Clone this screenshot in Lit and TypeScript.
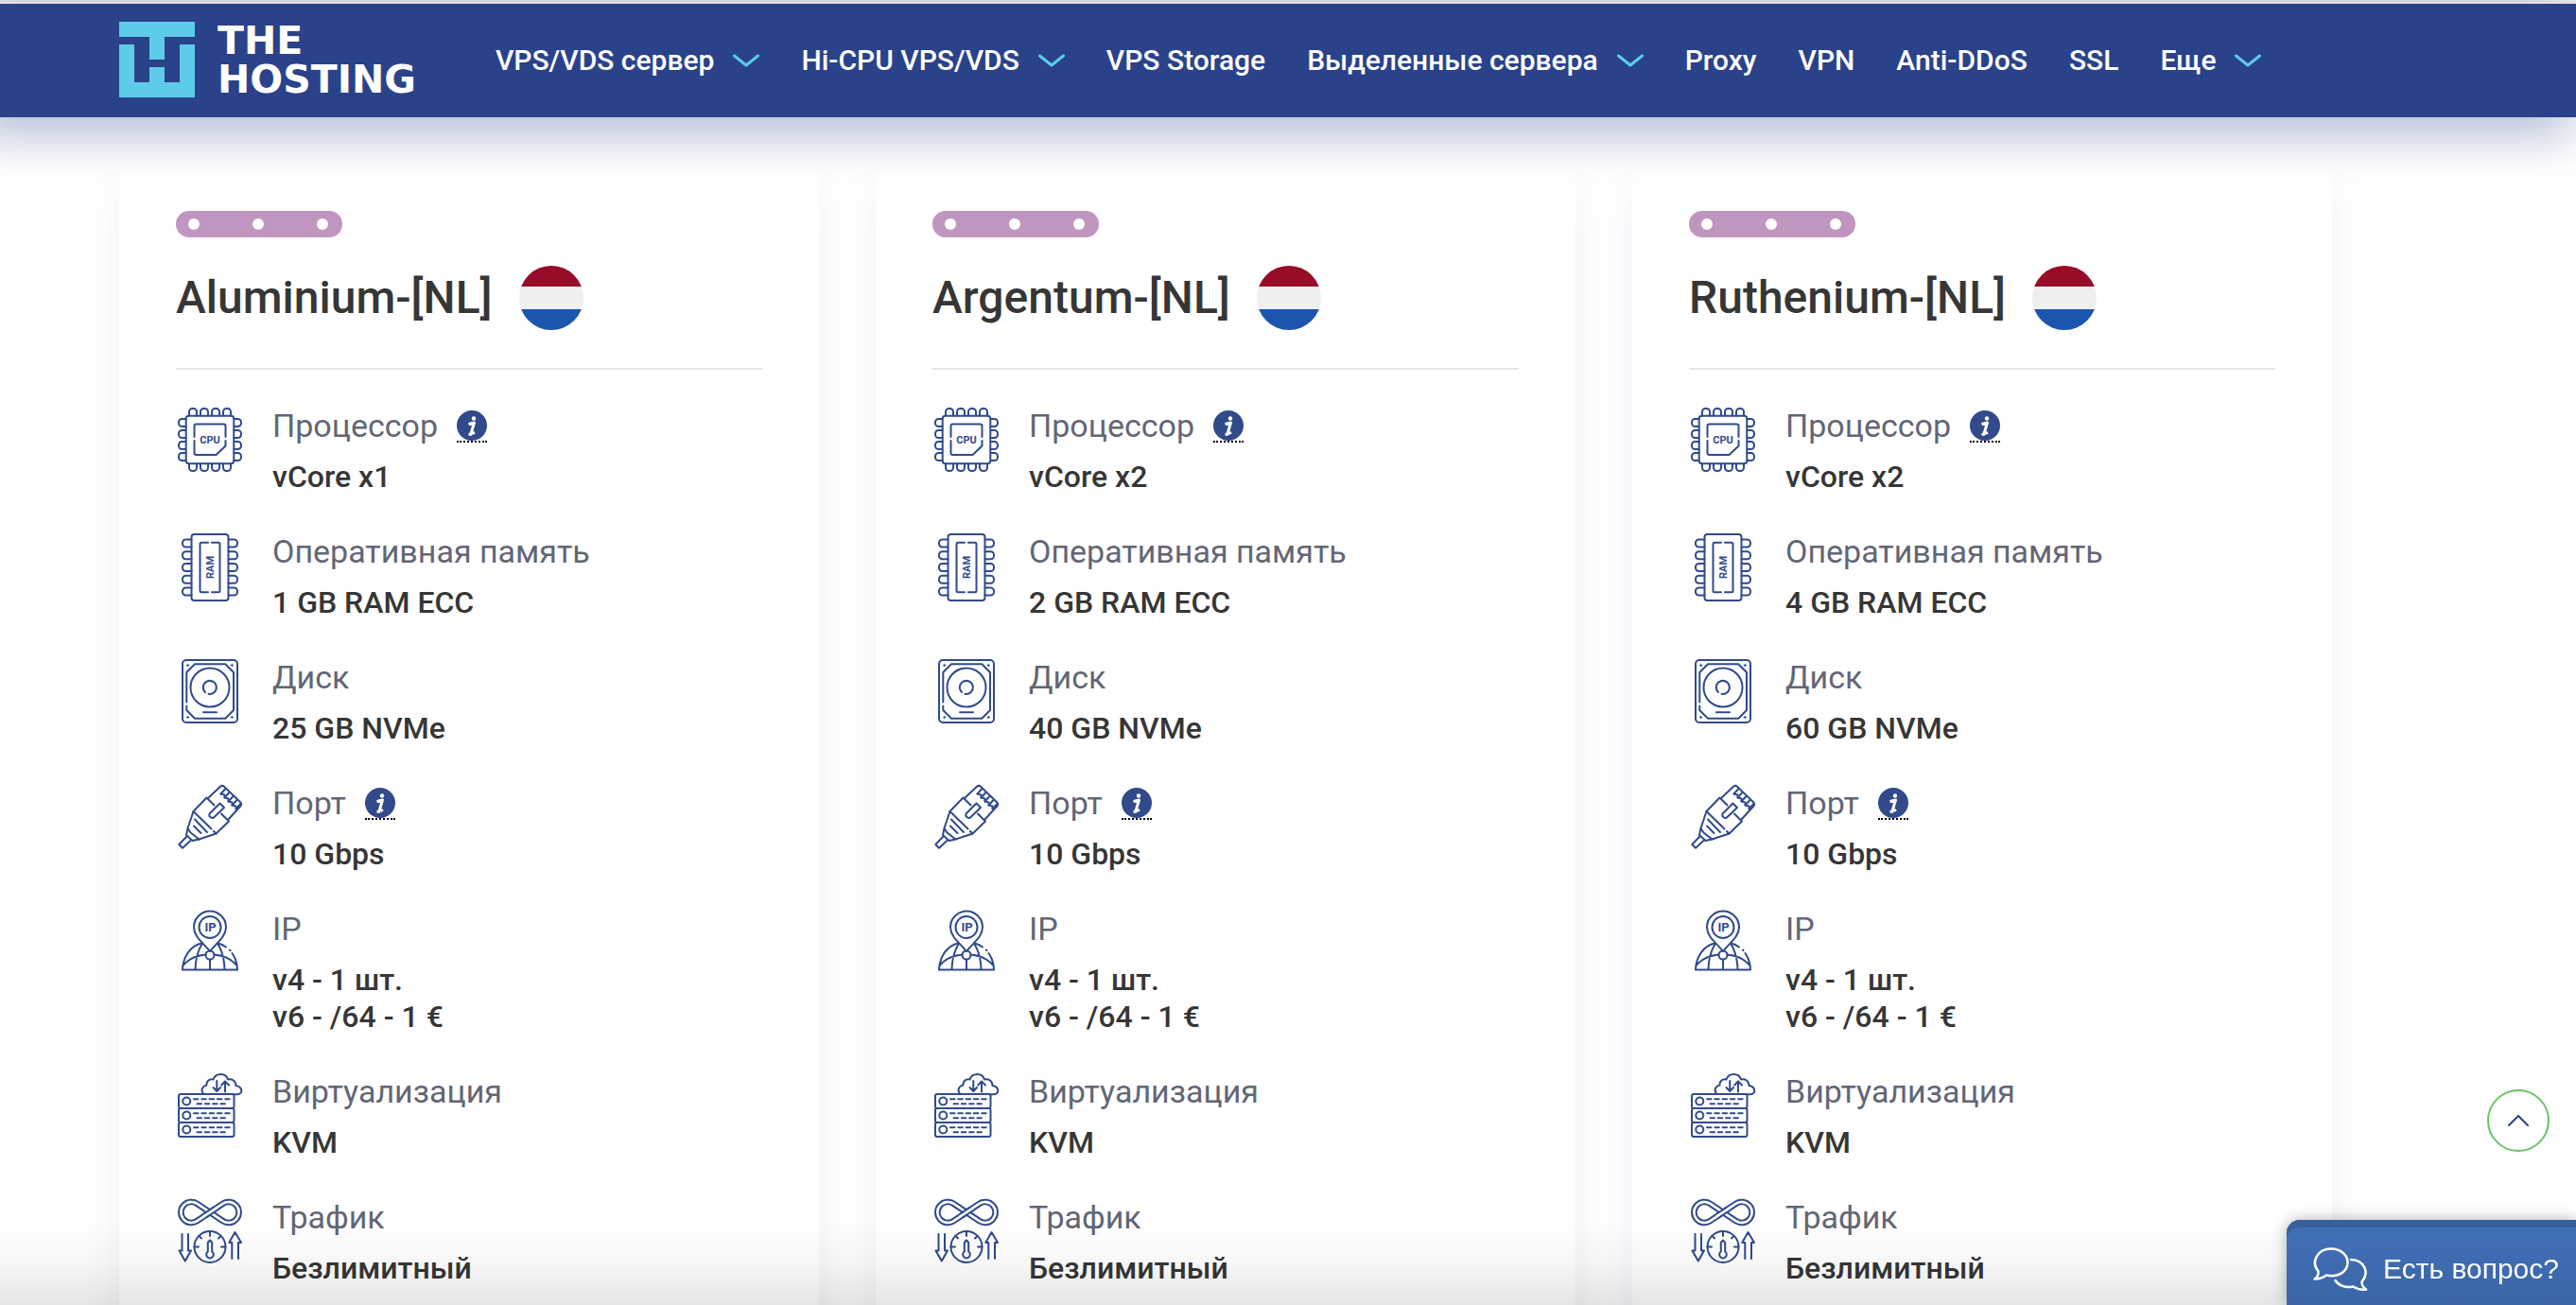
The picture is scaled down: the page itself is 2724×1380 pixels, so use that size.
import { LitElement, html, svg, css, nothing, SVGTemplateResult } from "lit";
import { customElement, property } from "lit/decorators.js";

interface Feature {
  icon: string;
  label: string;
  lines: string[];
  info?: boolean;
}

interface Plan {
  name: string;
  features: Feature[];
}

const makePlan = (name: string, cores: number, ram: number, disk: number): Plan => ({
  name,
  features: [
    { icon: "cpu", label: "Процессор", lines: [`vCore x${cores}`], info: true },
    { icon: "ram", label: "Оперативная память", lines: [`${ram} GB RAM ECC`] },
    { icon: "disk", label: "Диск", lines: [`${disk} GB NVMe`] },
    { icon: "port", label: "Порт", lines: ["10 Gbps"], info: true },
    { icon: "ip", label: "IP", lines: ["v4 - 1 шт.", "v6 - /64 - 1 €"] },
    { icon: "virt", label: "Виртуализация", lines: ["KVM"] },
    { icon: "traffic", label: "Трафик", lines: ["Безлимитный"] },
  ],
});

const plans: Plan[] = [
  makePlan("Aluminium-[NL]", 1, 1, 25),
  makePlan("Argentum-[NL]", 2, 2, 40),
  makePlan("Ruthenium-[NL]", 2, 4, 60),
];

const navItems: { text: string; menu?: boolean }[] = [
  { text: "VPS/VDS сервер", menu: true },
  { text: "Hi-CPU VPS/VDS", menu: true },
  { text: "VPS Storage" },
  { text: "Выделенные сервера", menu: true },
  { text: "Proxy" },
  { text: "VPN" },
  { text: "Anti-DDoS" },
  { text: "SSL" },
  { text: "Еще", menu: true },
];

const cpuPins = [16, 28, 40, 52];
const ramPins = [10.5, 23.2, 36, 48.8, 61.5];
const shelves = [22, 37, 52];
const contacts = [0, 4, 8, 12, 16];

const icons: Record<string, { w: number; h: number; art: SVGTemplateResult }> = {
  cpu: {
    w: 68,
    h: 68,
    art: svg`
      ${[0, 90, 180, 270].map(
        (a) => svg`<g transform="rotate(${a} 34 34)">${cpuPins.map(
          (x) => svg`<path d="M${x - 4} 8.5V4.5a3.5 3.5 0 0 1 3.5 -3.5h1a3.5 3.5 0 0 1 3.5 3.5V8.5"/>`
        )}</g>`
      )}
      <rect x="8.7" y="8.7" width="50.6" height="50.6" rx="3"/>
      <path d="M17.5 31V19.5q0 -2 2 -2h29q2 0 2 2V31M50.5 35v5.5l-10 9.5H19.5q-2 0 -2 -2V35"/>
      <text class="t" x="34" y="37.5" font-size="11">CPU</text>`,
  },
  ram: {
    w: 60,
    h: 72,
    art: svg`
      ${ramPins.map(
        (y) => svg`<path d="M10.5 ${y - 4}H4.5a3.5 3.5 0 0 0 -3.5 3.5v1a3.5 3.5 0 0 0 3.5 3.5H10.5M49.5 ${y - 4}h6a3.5 3.5 0 0 1 3.5 3.5v1a3.5 3.5 0 0 1 -3.5 3.5h-6"/>`
      )}
      <rect x="10.5" y="1" width="39" height="70" rx="3"/>
      <path d="M28 9.7H21q-1.5 0 -1.5 1.5v49.6q0 1.5 1.5 1.5H28M32 9.7h7q1.5 0 1.5 1.5v49.6q0 1.5 -1.5 1.5H32"/>
      <text class="t" x="0" y="0" font-size="11" transform="translate(34 36) rotate(-90)">RAM</text>`,
  },
  disk: {
    w: 60,
    h: 68,
    art: svg`
      <rect x="1" y="1" width="58" height="66" rx="4"/>
      <path d="M5.3 45.5V14L14 5.3H46.3L55 14V54L46.3 62.7H14L5.3 54V49.5"/>
      <circle cx="30" cy="30" r="20.5"/>
      <path d="M25 35A7 7 0 1 1 28.5 36.8"/>
      <path d="M23 56.2H37"/>
      <path stroke-width="1" d="M5.5 6.5h2.5M6.7 5.2v2.5M52 6.5h2.5M53.3 5.2v2.5M5.5 61.5h2.5M6.7 60.2v2.5M52 61.5h2.5M53.3 60.2v2.5"/>`,
  },
  port: {
    w: 68,
    h: 68,
    art: svg`
      <path d="M31.5 14.5L45 1.8Q47 0 49 1.8L66.3 18.5Q68 20.5 66.3 22.5L53 37"/>
      ${contacts.map((d) => svg`<path d="M${45.5 + d} ${9.5 + d}l4.5 -5"/>`)}
      <path d="M45.5 9.5l4 1 0 3 4 1 0 3 4 1 0 3 4 1 0 2.5"/>
      <path d="M38.5 21.5L30.5 13.5L16.5 28L10.5 46L13.5 50.5L22.5 57.5L40.5 51.5L54 38.5L46 30.5"/>
      <path d="M16.5 28L35.5 46.5M38 49L40.5 51.5M18 36.5L31 50M17 43.5L24.5 51"/>
      <path d="M33.5 30.5L44.5 19.5L49 24L38 34.5a3.2 3.2 0 0 1 -4.5 -4z"/>
      <path d="M10.5 46L9 53L15.5 59L22.5 57.5M10 54L1.3 63L5 66.8L14.5 58"/>`,
  },
  ip: {
    w: 60,
    h: 64,
    art: svg`
      <path d="M30 43C24 35 13 28 13 17.5A17 17 0 0 1 47 17.5C47 28 36 35 30 43Z"/>
      <circle cx="30" cy="17.5" r="11.5"/>
      <text class="t" x="30.5" y="22" font-size="13">IP</text>
      <circle cx="30" cy="47" r="4.5"/>
      <path d="M1 62.5H59M1 62.5C1.5 49 9 37 21.5 34.5M59 62.5C58.8 56 57 50 53.5 45M51 41.5l.5 .6M47 38.5Q43 35.5 38.5 34.5"/>
      <path d="M30 52V62M14.5 62Q15 46 21.5 35.5M45.5 62Q45 46 38.5 35.5M2 57.5Q10 48 25.5 46.5M58 57.5Q50 48 34.5 46.5"/>`,
  },
  virt: {
    w: 68,
    h: 68,
    art: svg`
      ${shelves.map(
        (y) => svg`<rect x="1" y="${y}" width="58.5" height="15" rx="2"/>
          <circle cx="9.3" cy="${y + 7.5}" r="4"/>
          <path stroke-dasharray="4.5 3.8" d="M17 ${y + 5.2}H55M20.5 ${y + 10.2}H52"/>`
      )}
      <path d="M27 21.5C23.5 17 27 13 30.5 12.5C30 8.5 33.5 5.5 37.5 6.5C40 -.8 51 -.8 53 6.5C57.5 5.5 61.5 8 61.5 13C69 14.5 69 22 63 22.3H59"/>
      <path d="M41.3 8V19M37.5 15L41.3 19L45 15M50 19.5V8.5M46.2 12.5L50 8.5L54 12.5"/>`,
  },
  traffic: {
    w: 68,
    h: 68,
    art: svg`
      <g stroke-linecap="butt">
        <path stroke-width="6.6" d="M20.5 4.9L47.5 23.1A11 11 0 1 0 47.5 4.9L20.5 23.1A11 11 0 1 1 20.5 4.9Z"/>
        <path class="gap" d="M20.5 4.9L47.5 23.1A11 11 0 1 0 47.5 4.9L20.5 23.1A11 11 0 1 1 20.5 4.9Z"/>
        <path stroke-width="6.6" d="M28.5 17.7L39.5 10.3"/>
        <path class="gap" d="M27 18.7L41 9.3"/>
      </g>
      <circle cx="34" cy="50.5" r="16.5"/>
      <path d="M34 34.5V39M17.5 50.5H22M46 50.5H50.5M22.5 39l2.5 2.5M45.5 39l-2.5 2.5"/>
      <path d="M31.8 55.5V46l2.2 -2.5l2.2 2.5V55.5a3.8 3.8 0 1 1 -4.4 0z"/>
      <path d="M4.5 37V54.5H1.5L7.8 65.5L14 54.5H11V37M57.3 63V46H54.3L60.5 35L67 46H64V63"/>`,
  },
};

@customElement("feature-icon")
export class FeatureIcon extends LitElement {
  @property() name = "cpu";

  static styles = css`
    :host {
      display: flex;
      justify-content: center;
      flex: none;
      width: 68px;
    }
    .glyph {
      display: block;
      overflow: visible;
      fill: none;
      stroke: #304a8b;
      stroke-width: 2;
      stroke-linecap: round;
      stroke-linejoin: round;
    }
    .t {
      font-family: Roboto, sans-serif;
      font-weight: 700;
      text-anchor: middle;
      fill: #304a8b;
      stroke: none;
    }
    .gap {
      stroke: #fff;
      stroke-width: 2.6;
    }
  `;

  render() {
    const { w, h, art } = icons[this.name];
    return html`<svg class="glyph" width=${w} height=${h} viewBox="0 0 ${w} ${h}" aria-hidden="true">${art}</svg>`;
  }
}

@customElement("plan-card")
export class PlanCard extends LitElement {
  @property({ attribute: false }) plan!: Plan;

  static styles = css`
    :host {
      display: block;
      min-width: 0;
    }
    .card {
      padding: 60px;
      background: #fff;
      border-radius: 4px;
      box-shadow: 0 40px 40px rgba(42, 66, 137, 0.08);
    }
    .badge {
      display: flex;
      align-items: center;
      justify-content: space-between;
      box-sizing: border-box;
      width: 176px;
      height: 28px;
      padding: 0 15px 0 13px;
      border-radius: 14px;
      background: #c095c0;
    }
    .dot {
      width: 12px;
      height: 12px;
      border-radius: 50%;
      background: #fff;
    }
    .head {
      display: flex;
      align-items: center;
      gap: 28px;
      margin-top: 30px;
      padding-bottom: 40px;
      border-bottom: 2px solid #e6e6e6;
    }
    .title {
      margin: 0;
      font-size: 48px;
      line-height: 56px;
      font-weight: 500;
      color: #363636;
    }
    .flag {
      display: block;
      flex: none;
    }
    .features {
      display: flex;
      flex-direction: column;
      gap: 40px;
      margin: 40px 0 0;
      padding: 0 2px;
      list-style: none;
    }
    .feature {
      display: flex;
      align-items: flex-start;
      gap: 32px;
    }
    .label {
      display: flex;
      gap: 20px;
      height: 40px;
      font-size: 34px;
      line-height: 38px;
      color: #626675;
    }
    .info {
      box-sizing: border-box;
      width: 32px;
      height: 34px;
      margin-top: 3px;
      padding: 0;
      border: 0;
      border-bottom: 2px dotted #000;
      background: none;
      cursor: help;
    }
    .info-mark {
      display: block;
    }
    .value {
      margin-top: 14px;
      font-size: 32px;
      line-height: 39px;
      font-weight: 500;
      color: #363636;
    }
  `;

  private renderInfo(label: string) {
    return html`<button class="info" type="button" aria-label=${label}>
      <svg class="info-mark" width="32" height="32" viewBox="0 0 32 32" aria-hidden="true">
        <circle cx="16" cy="16" r="16" fill="#304a8b" />
        <circle cx="18" cy="8.5" r="2.2" fill="#fff" />
        <path d="M12.5 14.5L18.5 13L15.5 23Q15 25.5 19 23.3M12.5 25.2H16" fill="none" stroke="#fff" stroke-width="3" stroke-linejoin="round" />
      </svg>
    </button>`;
  }

  render() {
    return html`
      <article class="card">
        <div class="badge"><i class="dot"></i><i class="dot"></i><i class="dot"></i></div>
        <header class="head">
          <h2 class="title">${this.plan.name}</h2>
          <svg class="flag" width="68" height="68" viewBox="0 0 68 68" role="img" aria-label="NL">
            <clipPath id="round"><circle cx="34" cy="34" r="34" /></clipPath>
            <g clip-path="url(#round)">
              <rect width="68" height="68" fill="#efefef" />
              <rect width="68" height="22" fill="#970c27" />
              <rect y="46" width="68" height="22" fill="#1c55ae" />
            </g>
          </svg>
        </header>
        <ul class="features">
          ${this.plan.features.map(
            (f) => html`<li class="feature">
              <feature-icon name=${f.icon}></feature-icon>
              <div>
                <div class="label"><span>${f.label}</span>${f.info ? this.renderInfo(f.label) : nothing}</div>
                <div class="value">${f.lines.map((l) => html`<div>${l}</div>`)}</div>
              </div>
            </li>`
          )}
        </ul>
      </article>
    `;
  }
}

@customElement("app-root")
export class AppRoot extends LitElement {
  static styles = css`
    :host {
      display: block;
      height: 100vh;
      overflow: hidden;
      background: #fff;
      font-family: Roboto, "Noto Sans", sans-serif;
    }
    .top {
      position: relative;
      z-index: 1;
      display: flex;
      align-items: center;
      gap: 84px;
      height: 120px;
      padding: 0 126px;
      border-top: 2px solid #e5deda;
      margin-top: 2px;
      box-sizing: content-box;
      background: #2a4289;
      box-shadow: -16px 8px 50px 12px rgba(42, 66, 137, 0.34);
    }
    .strip {
      background: #faf6f5;
      display: flow-root;
    }
    .brand {
      display: flex;
      gap: 24px;
      text-decoration: none;
    }
    .brand-name {
      display: flex;
      flex-direction: column;
      font-family: "DejaVu Sans", sans-serif;
      font-size: 41px;
      line-height: 41px;
      font-weight: 700;
      color: #fff;
    }
    .brand-mark {
      display: block;
    }
    .nav {
      display: flex;
      gap: 44px;
    }
    .link {
      display: flex;
      align-items: center;
      gap: 20px;
      padding: 0;
      border: 0;
      background: none;
      font: 500 30px/36px Roboto, sans-serif;
      color: #fff;
      text-decoration: none;
      white-space: nowrap;
      cursor: pointer;
    }
    .plans {
      display: grid;
      grid-template-columns: repeat(3, 1fr);
      gap: 60px;
      padding: 39px 258px 60px 126px;
    }
    .fade {
      position: fixed;
      inset: auto 0 0 0;
      height: 90px;
      background: linear-gradient(rgba(0, 0, 0, 0), rgba(0, 0, 0, 0.03) 50%, rgba(0, 0, 0, 0.1));
      pointer-events: none;
    }
    .up {
      position: fixed;
      right: 28px;
      bottom: 162px;
      display: grid;
      place-items: center;
      width: 66px;
      height: 66px;
      padding: 0;
      border: 2px solid #6bc366;
      border-radius: 50%;
      background: #fff;
      cursor: pointer;
    }
    .chat {
      position: fixed;
      right: 0;
      bottom: 0;
      display: flex;
      align-items: center;
      gap: 16px;
      height: 90px;
      box-sizing: border-box;
      padding: 14px 18px 0 28px;
      border: 0;
      border-radius: 14px 0 0 0;
      background: linear-gradient(#4170b8, #3b65a8);
      box-shadow: inset 0 8px #3a5f9d, 0 0 16px rgba(0, 0, 0, 0.3);
      font: 30px/36px "Liberation Sans", Arial, sans-serif;
      color: #fff;
      white-space: nowrap;
      cursor: pointer;
    }
  `;

  render() {
    return html`
      <div class="strip">
        <header class="top">
          <a class="brand" href="#">
            <svg class="brand-mark" width="80" height="80" viewBox="0 0 80 80" aria-hidden="true">
              <path fill="#5ecbe8" d="M0 0H80V16H48V40H32V16H0ZM0 24H16V64H32V48H48V64H64V24H80V80H0Z" />
            </svg>
            <span class="brand-name"><span>THE</span><span>HOSTING</span></span>
          </a>
          <nav class="nav">
            ${navItems.map((n) =>
              n.menu
                ? html`<button class="link" type="button">
                    ${n.text}
                    <svg width="28" height="14" viewBox="0 0 28 14" fill="none" stroke="#5ecbe8" stroke-width="3" stroke-linecap="round" stroke-linejoin="round" aria-hidden="true">
                      <path d="M1.5 2L14 12L26.5 2" />
                    </svg>
                  </button>`
                : html`<a class="link" href="#">${n.text}</a>`
            )}
          </nav>
        </header>
      </div>
      <main class="plans">${plans.map((p) => html`<plan-card .plan=${p}></plan-card>`)}</main>
      <div class="fade"></div>
      <button class="up" type="button" aria-label="Наверх">
        <svg width="22" height="12" viewBox="0 0 22 12" fill="none" stroke="#2a4289" stroke-width="2" stroke-linecap="round" stroke-linejoin="round" aria-hidden="true">
          <path d="M1 11L11 1L21 11" />
        </svg>
      </button>
      <button class="chat" type="button">
        <svg width="58" height="46" viewBox="0 0 58 46" fill="none" stroke="#fff" stroke-width="2.5" stroke-linecap="round" stroke-linejoin="round" aria-hidden="true">
          <path d="M1.5 33.5Q6 31 5.5 25.5C-3 15 5 1.5 19 1.5C29 1.5 36.5 8 36.5 16C36.5 26 26 32.5 14 29.5Q9 33.5 1.5 33.5Z" />
          <path d="M40 13C54 13.5 60 26 51.5 36.5Q51.5 41.5 56 44.5Q48 45.5 42.5 41.5C34 43.5 26.5 40 23.5 35" />
        </svg>
        Есть вопрос?
      </button>
    `;
  }
}
